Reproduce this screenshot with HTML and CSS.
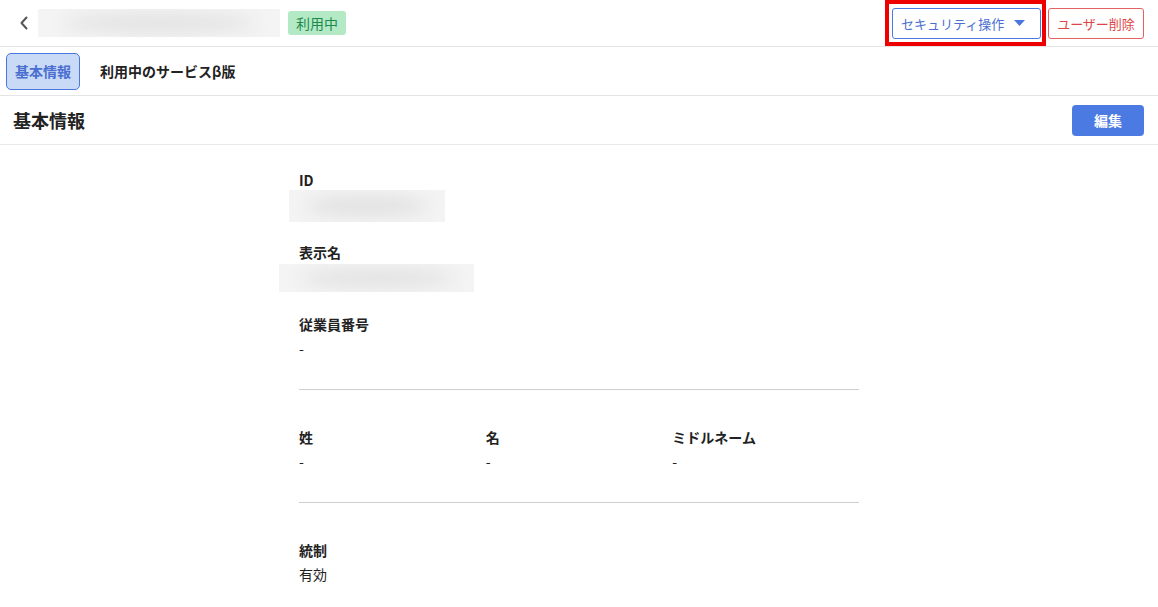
FILE: index.html
```html
<!DOCTYPE html>
<html lang="ja">
<head>
<meta charset="utf-8">
<title>ユーザー詳細</title>
<link rel="stylesheet" href="styles.css">
</head>
<body>
<header class="topbar">
  <div class="topbar-left">
    <button class="back" aria-label="戻る">
      <svg width="10" height="14" viewBox="0 0 10 14"><path d="M7.5 1.5 L2.5 7 L7.5 12.5" fill="none" stroke="#555" stroke-width="2" stroke-linecap="round" stroke-linejoin="round"/></svg>
    </button>
    <div class="masked masked-title"></div>
    <span class="badge">利用中</span>
  </div>
  <div class="topbar-right">
    <div class="focus-ring">
      <button class="btn btn-outline-blue"><span>セキュリティ操作</span>
        <svg class="caret" width="11" height="6" viewBox="0 0 11 6"><path d="M0 0 H11 L5.5 6 Z" fill="#4a78e0"/></svg>
      </button>
    </div>
    <button class="btn btn-outline-red">ユーザー削除</button>
  </div>
</header>

<nav class="tabs">
  <a class="tab tab-active">基本情報</a>
  <a class="tab">利用中のサービスβ版</a>
</nav>

<section class="section-head">
  <h1>基本情報</h1>
  <button class="btn-primary">編集</button>
</section>

<main class="detail">
  <div class="field">
    <div class="label">ID</div>
    <div class="masked masked-id"></div>
  </div>
  <div class="field">
    <div class="label">表示名</div>
    <div class="masked masked-name"></div>
  </div>
  <div class="field">
    <div class="label">従業員番号</div>
    <div class="value">-</div>
  </div>
  <hr class="divider">
  <div class="field-row">
    <div class="field">
      <div class="label">姓</div>
      <div class="value">-</div>
    </div>
    <div class="field">
      <div class="label">名</div>
      <div class="value">-</div>
    </div>
    <div class="field">
      <div class="label">ミドルネーム</div>
      <div class="value">-</div>
    </div>
  </div>
  <hr class="divider">
  <div class="field">
    <div class="label">統制</div>
    <div class="value">有効</div>
  </div>
</main>
</body>
</html>
```

FILE: styles.css
```css
* { box-sizing: border-box; }

body {
  margin: 0;
  background: #fff;
  color: #222;
  font-family: "Noto Sans CJK JP", "Noto Sans", sans-serif;
  font-size: 14px;
}

button { font-family: inherit; }

/* top bar */
.topbar {
  height: 47px;
  display: flex;
  align-items: center;
  justify-content: space-between;
  border-bottom: 1px solid #e4e4e4;
  padding: 0 14px;
}
.topbar-left {
  display: flex;
  align-items: center;
}
.back {
  border: 0;
  background: none;
  padding: 0;
  width: 20px;
  height: 20px;
  display: flex;
  align-items: center;
  justify-content: center;
  margin-right: 4px;
}

/* masked (blurred) personal data */
.masked {
  background: #f4f4f4;
  position: relative;
  overflow: hidden;
}
.masked::after {
  content: "";
  position: absolute;
  left: 10%;
  right: 10%;
  top: 25%;
  bottom: 25%;
  background: #dcdcdc;
  border-radius: 50%;
  filter: blur(9px);
}
.masked-title {
  width: 242px;
  height: 28px;
  margin-right: 8px;
}
.badge {
  background: #b4e9c5;
  color: #1d8a4d;
  font-size: 14px;
  line-height: 24px;
  padding: 0 8px;
  border-radius: 3px;
}

.topbar-right {
  display: flex;
  align-items: center;
}
.focus-ring {
  position: relative;
}
.focus-ring::after {
  content: "";
  position: absolute;
  left: -7px;
  right: -5px;
  top: -8px;
  bottom: -7px;
  border: 4px solid #ee0000;
  pointer-events: none;
}
.btn {
  height: 31px;
  border-radius: 3px;
  background: #fff;
  font-size: 13px;
  white-space: nowrap;
  display: flex;
  align-items: center;
  cursor: pointer;
}
.btn-outline-blue {
  width: 149px;
  padding: 0 15px 0 8px;
  border: 1px solid #4a78e0;
  color: #4a6fd0;
  justify-content: space-between;
}
.btn-outline-red {
  margin-left: 7px;
  width: 96px;
  padding: 0;
  justify-content: center;
  border: 1px solid #e36060;
  color: #e04545;
}

/* tabs */
.tabs {
  height: 49px;
  display: flex;
  align-items: center;
  gap: 11px;
  padding: 0 6px;
  border-bottom: 1px solid #e4e4e4;
}
.tab {
  font-weight: 700;
  font-size: 14px;
  color: #222;
  height: 37px;
  line-height: 35px;
  padding: 0 8px;
  border: 1px solid transparent;
  border-radius: 5px;
}
.tab-active {
  background: #c9daf6;
  border-color: #4a78e0;
  color: #4a6fd0;
}

/* section header */
.section-head {
  height: 49px;
  display: flex;
  align-items: center;
  justify-content: space-between;
  padding: 0 14px 0 13px;
  border-bottom: 1px solid #e8e8e8;
}
.section-head h1 {
  margin: 0;
  font-size: 18px;
  font-weight: 700;
  color: #222;
}
.btn-primary {
  width: 72px;
  height: 31px;
  border: 0;
  border-radius: 4px;
  background: #4a7ae2;
  color: #fff;
  font-weight: 700;
  font-size: 14px;
}

/* detail body */
.detail {
  width: 560px;
  margin-left: 299px;
  padding-top: 24px;
}
.field {
  margin-bottom: 25px;
}
.label {
  font-weight: 700;
  font-size: 14px;
  line-height: 22px;
}
.value {
  font-size: 14px;
  line-height: 24px;
  margin-top: 1px;
}
.masked-id {
  width: 156px;
  height: 32px;
  margin: -1px 0 -6px -10px;
}
.masked-name {
  width: 195px;
  height: 28px;
  margin: 1px 0 -4px -20px;
}
.divider {
  border: 0;
  border-top: 1px solid #cfcfcf;
  margin: 29px 0 36px;
}
.field-row {
  display: grid;
  grid-template-columns: repeat(3, 1fr);
}
.field-row .field { margin-bottom: 0; }
```
